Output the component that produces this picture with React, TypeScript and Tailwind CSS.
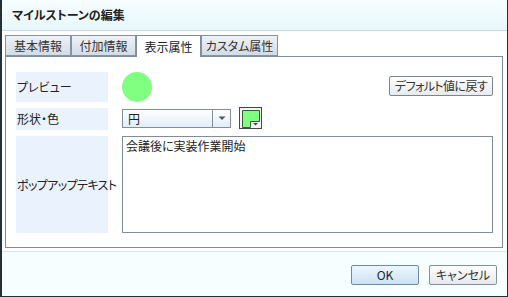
const font = "font-['Noto_Sans_CJK_JP','Noto_Sans',sans-serif] [font-feature-settings:'palt']";

function Tab({ label, active, w }: { label: string; active?: boolean; w: string }) {
  return (
    <div
      className={
        active
          ? `${w} h-[22px] -mb-px border border-b-0 border-[#7d8da0] bg-white flex items-center justify-center text-[12px] text-[#222] z-10`
          : `${w} h-[21px] border border-[#8494a6] bg-gradient-to-b from-[#eef2f6] to-[#d3dbe4] flex items-center justify-center text-[12px] text-[#333]`
      }
    >
      {label}
    </div>
  );
}

function ColorButton() {
  return (
    <div className="w-[23px] h-[22px] ml-[8px] -mt-px border border-[#3f4952] bg-[#f4f6f8]">
      <svg width="21" height="20" viewBox="0 0 21 20">
        <path d="M2.5 2.5 H19.5 V13.5 H10.5 V19.5 H2.5 Z" fill="#80ff80" stroke="#3a5a3a" />
        <path d="M13 15 L18 15 L15.5 17.5 Z" fill="#444" />
      </svg>
    </div>
  );
}

export default function App() {
  return (
    <div className={`${font} w-[508px] h-[297px] border border-l-2 border-t-0 border-[#26303a] flex flex-col bg-white`}>
      <div className="h-[31px] shrink-0 border-b border-[#c5d8ec] bg-gradient-to-b from-[#f6fdff] to-[#e8f8fd] flex items-center pl-[10px] text-[12px] font-bold text-[#222]">
        マイルストーンの編集
      </div>

      <div className="pt-[4px] pl-[3px] pr-[4px] flex flex-col">
        <div className="flex h-[21px] items-end">
          <Tab label="基本情報" w="w-[66px]" />
          <Tab label="付加情報" w="w-[65px]" />
          <Tab label="表示属性" w="w-[65px]" active />
          <Tab label="カスタム属性" w="w-[77px]" />
        </div>

        <div className="h-[192px] border border-[#7d8da0] pl-[10px] pr-[9px] pt-[15px] flex flex-col gap-[6px] text-[12px] text-[#222]">
          <div className="flex h-[30px]">
            <div className="w-[92px] bg-[#eaf2fe] flex items-center pl-[1px]">プレビュー</div>
            <div className="ml-[14px] w-[30px] h-[30px] rounded-full bg-[#80ff80]" />
            <div className="ml-auto mt-[4px] w-[104px] h-[20px] border border-[#7a8590] rounded-[2px] bg-gradient-to-b from-[#fdfdfd] to-[#e8ebee] flex items-center justify-center whitespace-nowrap tracking-[-0.6px] text-[#333]">
              デフォルト値に戻す
            </div>
          </div>

          <div className="flex h-[22px]">
            <div className="w-[92px] bg-[#eaf2fe] flex items-center pl-[1px]">形状・色</div>
            <div className="ml-[14px] mt-[1px] w-[109px] h-[19px] border border-[#7f8fa0] bg-gradient-to-b from-white to-[#e2edf8] flex">
              <div className="flex-1 flex items-center pl-[5px]">円</div>
              <div className="w-[18px] border-l border-[#7f8fa0] flex items-center justify-center">
                <svg width="8" height="5" viewBox="0 0 8 5">
                  <path d="M0.5 0.5 H7.5 L4 4 Z" fill="#555" />
                </svg>
              </div>
            </div>
            <ColorButton />
          </div>

          <div className="flex h-[97px]">
            <div className="w-[92px] bg-[#eaf2fe] flex items-center pl-[1px] whitespace-nowrap tracking-[-0.6px]">ポップアップテキスト</div>
            <div className="ml-[14px] flex-1 h-[97px] border border-[#7d8da0] px-[3px] pt-[1px] leading-[16px]">
              会議後に実装作業開始
            </div>
          </div>
        </div>
      </div>

      <div className="mt-[3px] flex-1 border-t border-[#d6e6f7] bg-[#f7feff] flex justify-end items-start pt-[13px] pr-[10px] gap-[10px] text-[12px]">
        <div className="w-[68px] h-[20px] border border-[#6f8aa6] rounded-[2px] bg-gradient-to-b from-[#eef6fd] to-[#cde2f5] flex items-center justify-center text-[#223]">
          OK
        </div>
        <div className="w-[68px] h-[20px] border border-[#86909a] rounded-[2px] bg-gradient-to-b from-[#fdfdfd] to-[#e6e9ec] flex items-center justify-center text-[#333]">
          キャンセル
        </div>
      </div>
    </div>
  );
}
